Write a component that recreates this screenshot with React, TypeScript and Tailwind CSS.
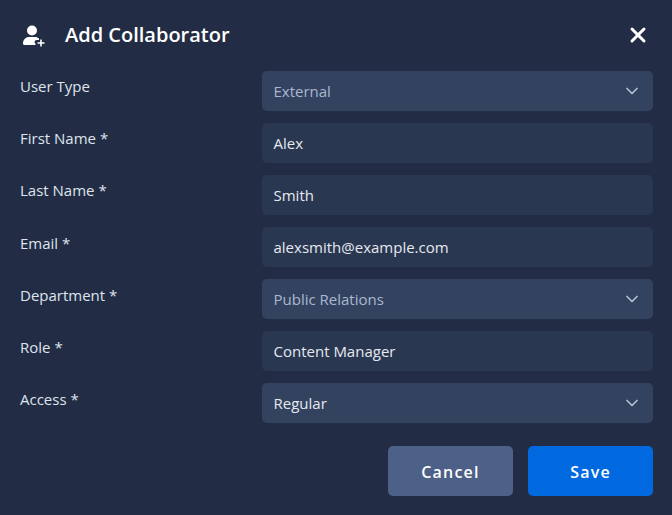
import { ChevronDown, X } from "lucide-react";

const FIELDS = [
  { label: "User Type", value: "External", select: true, muted: true },
  { label: "First Name *", value: "Alex" },
  { label: "Last Name *", value: "Smith" },
  { label: "Email *", value: "alexsmith@example.com" },
  { label: "Department *", value: "Public Relations", select: true, muted: true },
  { label: "Role *", value: "Content Manager" },
  { label: "Access *", value: "Regular", select: true },
];

function AddUserIcon() {
  return (
    <svg width="24" height="24" viewBox="0 0 24 24" fill="white" className="shrink-0">
      <circle cx="10" cy="7.5" r="5" />
      <path d="M1 20.5c0-4 3-6.5 6-6.5h6c1.6 0 3 .6 4 1.6V17h-2.5a2 2 0 0 0-1 3.7V22H2.5C1.6 22 1 21.4 1 20.5z" />
      <path d="M18.2 16.5h1.6v2.7h2.7v1.6h-2.7v2.7h-1.6v-2.7h-2.7v-1.6h2.7z" />
    </svg>
  );
}

export default function App() {
  return (
    <div className="h-[515px] w-[672px] overflow-hidden bg-[#222d45] font-['Open_Sans',sans-serif] text-white">
      <div className="flex h-[70.7px] items-center pl-[22px] pr-[22px] pb-[1px]">
        <AddUserIcon />
        <h1 className="ml-[19px] flex-1 text-[20px] font-semibold">Add Collaborator</h1>
        <X className="h-[24px] w-[24px] text-white" strokeWidth={3} />
      </div>

      <div className="flex flex-col gap-[12.15px] pl-[20px] pr-[19px]">
        {FIELDS.map((field) => (
          <div key={field.label} className="flex items-start">
            <label className="mt-[4.72px] w-[242px] text-[15px] leading-[22px] text-[#dfe4ee]">{field.label}</label>
            <div
              className={`flex h-[39.9px] flex-1 items-center justify-between rounded-[5px] pl-[11.5px] pr-[11px] text-[15px] ${
                field.select ? "bg-[#33435f]" : "bg-[#2a3751]"
              } ${field.muted ? "text-[#a9b8d2]" : "text-[#e6e9f0]"}`}
            >
              <span className="pt-[1px]">{field.value}</span>
              {field.select && <ChevronDown className="h-[20px] w-[20px] text-[#b4c0d6]" strokeWidth={2} />}
            </div>
          </div>
        ))}
      </div>

      <div className="mt-[23.1px] flex justify-end gap-[15px] pr-[19px]">
        <button className="h-[49.8px] w-[125px] rounded-[5px] bg-[#4d6087] pt-[2px] text-[16px] font-[550] tracking-[1.2px] text-white">
          Cancel
        </button>
        <button className="h-[49.8px] w-[125px] rounded-[5px] bg-[#0069e0] pt-[2px] text-[16px] font-[550] tracking-[1.2px] text-white">
          Save
        </button>
      </div>
    </div>
  );
}
